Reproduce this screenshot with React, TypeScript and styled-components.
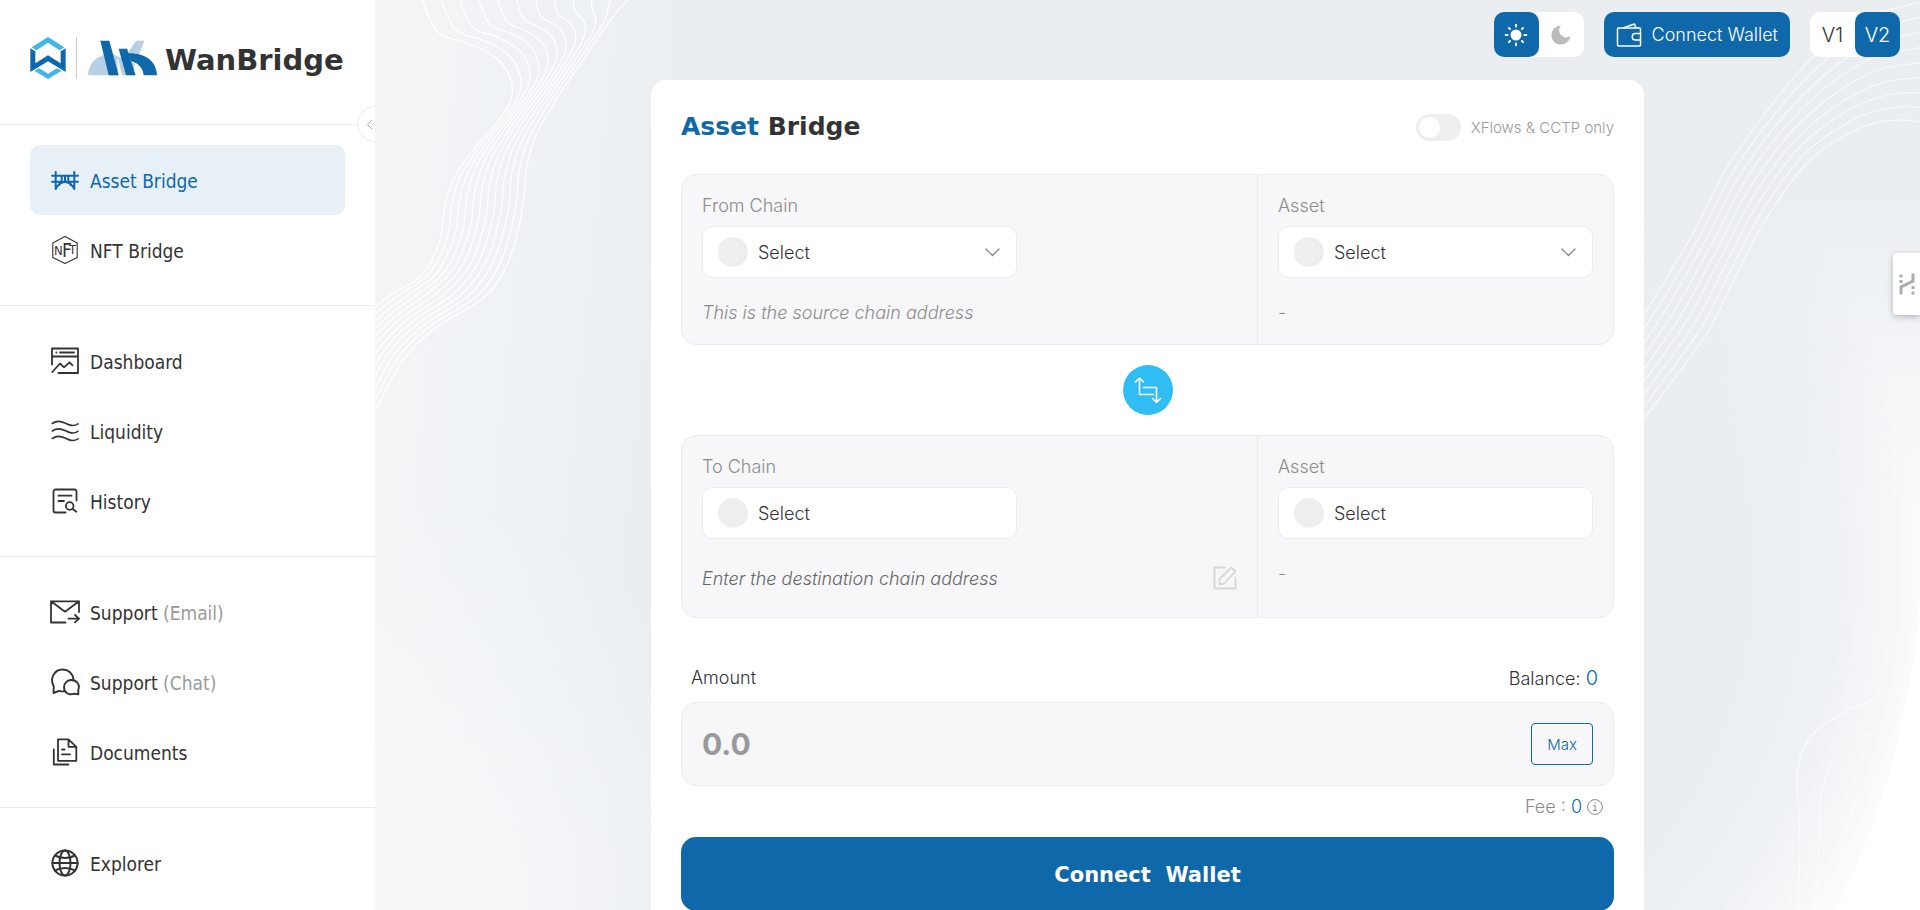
import React from "react";
import styled, { createGlobalStyle } from "styled-components";

const blue = "#0f68aa";
const ink = "#333333";
const muted = "#999999";
const line = "#ebebed";
const uiFont = `Inter, "Liberation Sans", sans-serif`;
const navFont = `"DejaVu Sans Condensed", "Noto Sans", sans-serif`;
const displayFont = `"DejaVu Sans", sans-serif`;

const GlobalStyle = createGlobalStyle`
  *, *::before, *::after { box-sizing: border-box; }
  body { margin: 0; color: ${ink}; font-family: ${uiFont}; font-size: 18px; font-weight: 300; }
  button, input, select { font: inherit; color: inherit; margin: 0; }
  button { cursor: pointer; }
`;

const Shell = styled.div`
  display: flex;
  height: 100vh;
  overflow: hidden;
`;

/* ---------- sidebar ---------- */

const Sidebar = styled.aside`
  position: relative;
  flex: none;
  width: 375px;
  height: 100%;
  overflow: hidden;
  background: #fff;
`;

const Brand = styled.a`
  display: flex;
  align-items: center;
  height: 124px;
  padding: 0 30px 8px;
  color: ${ink};
  text-decoration: none;
`;

const BrandRule = styled.span`
  width: 1px;
  height: 42px;
  margin: 0 11px 0 10px;
  background: #cccccc;
`;

const BrandName = styled.span`
  margin-left: 8px;
  padding-top: 3px;
  font: 700 29px/42px ${displayFont};
`;

const CollapseButton = styled.button`
  position: absolute;
  top: 106px;
  right: -18px;
  display: flex;
  align-items: center;
  width: 36px;
  height: 36px;
  padding: 0 0 0 8px;
  border: 1px solid ${line};
  border-radius: 50%;
  background: #fff;
`;

const NavGroup = styled.ul`
  margin: 0;
  padding: 20px 30px;
  border-top: 1px solid ${line};
  list-style: none;
`;

const NavLink = styled.a<{ $active?: boolean }>`
  display: flex;
  align-items: center;
  gap: 10px;
  height: 70px;
  padding: 0 20px;
  border-radius: 10px;
  background: ${(p) => (p.$active ? "#e7f0f7" : "transparent")};
  color: ${(p) => (p.$active ? blue : ink)};
  font: 400 19px/24px ${navFont};
  text-decoration: none;
`;

const NavText = styled.span`
  padding-top: 2px;
`;

const NavHint = styled.span`
  color: ${muted};
`;

/* ---------- main area ---------- */

const Main = styled.main`
  position: relative;
  flex: 1;
  min-width: 0;
  overflow: hidden auto;
  scrollbar-width: none;
  background: #eaeef1;
`;

const Backdrop = styled.svg`
  position: absolute;
  top: 0;
  left: 0;
  width: 100%;
  height: 100vh;
`;

const Content = styled.div`
  position: relative;
  display: flex;
  flex-direction: column;
  align-items: center;
  padding: 12px 20px 40px;
`;

const TopBar = styled.header`
  display: flex;
  align-self: flex-end;
  gap: 20px;
  margin-bottom: 23px;
`;

const Segmented = styled.div`
  display: flex;
  border-radius: 10px;
  background: #fff;
`;

const Segment = styled.button<{ $on?: boolean }>`
  display: flex;
  align-items: center;
  justify-content: center;
  width: 45px;
  height: 45px;
  padding: 0;
  border: 0;
  border-radius: 10px;
  background: ${(p) => (p.$on ? blue : "transparent")};
  color: ${(p) => (p.$on ? "#fff" : ink)};
  font-size: 20px;
`;

const WalletButton = styled.button`
  display: flex;
  align-items: center;
  gap: 10px;
  height: 45px;
  padding: 0 12px;
  border: 0;
  border-radius: 10px;
  background: ${blue};
  color: #fff;
`;

const Card = styled.section`
  width: 100%;
  max-width: 993px;
  padding: 30px;
  border-radius: 15px;
  background: #fff;
`;

const CardHead = styled.div`
  display: flex;
  align-items: center;
  justify-content: space-between;
  margin-bottom: 30px;
`;

const Title = styled.h1`
  margin: 0;
  font: 700 25px/34px ${displayFont};
`;

const TitleAccent = styled.span`
  color: ${blue};
`;

const SwitchLabel = styled.label`
  display: flex;
  align-items: center;
  gap: 10px;
  color: ${muted};
  font-size: 15px;
`;

const Switch = styled.input`
  appearance: none;
  display: flex;
  align-items: center;
  width: 45px;
  height: 27px;
  padding: 0 3px;
  border-radius: 14px;
  background: #eeeeee;
  &::before {
    content: "";
    width: 21px;
    height: 21px;
    border-radius: 50%;
    background: #fff;
  }
  &:checked { justify-content: flex-end; background: ${blue}; }
`;

const Panel = styled.div`
  display: flex;
  border: 1px solid ${line};
  border-radius: 15px;
  background: #f7f7f9;
`;

const ChainColumn = styled.div`
  flex: 1;
  min-width: 0;
  padding: 20px;
`;

const AssetColumn = styled.div`
  flex: none;
  width: 356px;
  padding: 20px;
  border-left: 1px solid ${line};
`;

const FieldLabel = styled.label`
  display: block;
  margin-bottom: 9px;
  color: #8c8c8c;
  line-height: 22px;
`;

const SelectBox = styled.div`
  position: relative;
  display: flex;
  align-items: center;
  width: 100%;
  max-width: 315px;
  height: 52px;
  border: 1px solid ${line};
  border-radius: 10px;
  background: #fff;
`;

const TokenDot = styled.span`
  position: absolute;
  left: 15px;
  width: 30px;
  height: 30px;
  border-radius: 50%;
  background: #eeeeee;
  pointer-events: none;
`;

const SelectControl = styled.select`
  appearance: none;
  width: 100%;
  height: 100%;
  padding: 0 40px 0 55px;
  border: 0;
  border-radius: 10px;
  background: transparent;
`;

const Chevron = styled.svg`
  position: absolute;
  right: 16px;
  pointer-events: none;
`;

const Note = styled.p<{ $italic?: boolean }>`
  margin: 24px 0 0;
  color: #8c8c8c;
  line-height: 22px;
  font-style: ${(p) => (p.$italic ? "italic" : "normal")};
`;

const AddressRow = styled.div`
  display: flex;
  align-items: center;
  height: 38px;
  margin-top: 20px;
`;

const AddressInput = styled.input`
  flex: 1;
  min-width: 0;
  height: 100%;
  padding: 0;
  border: 0;
  outline: 0;
  background: transparent;
  font-style: italic;
  &::placeholder { color: #666666; opacity: 1; }
`;

const IconButton = styled.button`
  display: flex;
  padding: 0;
  border: 0;
  background: transparent;
`;

const SwapButton = styled.button`
  display: flex;
  align-items: center;
  justify-content: center;
  width: 50px;
  height: 50px;
  margin: 20px auto;
  padding: 0;
  border: 0;
  border-radius: 50%;
  background: #2fbdf3;
`;

const AmountHead = styled.div`
  display: flex;
  justify-content: space-between;
  margin: 48px 16px 11px 10px;
  line-height: 24px;
`;

const Figure = styled.span`
  color: ${blue};
  font-size: 20px;
`;

const AmountPanel = styled(Panel)`
  align-items: center;
  height: 84px;
  padding: 0 20px;
`;

const AmountInput = styled.input`
  flex: 1;
  min-width: 0;
  height: 100%;
  padding: 0;
  border: 0;
  outline: 0;
  background: transparent;
  font-size: 30px;
  font-weight: 700;
  &::placeholder { color: ${muted}; opacity: 1; }
`;

const MaxButton = styled.button`
  width: 62px;
  height: 42px;
  padding: 0;
  border: 1px solid ${blue};
  border-radius: 4px;
  background: transparent;
  color: ${blue};
  font-size: 15px;
`;

const FeeRow = styled.div`
  display: flex;
  align-items: center;
  justify-content: flex-end;
  gap: 5px;
  margin: 9px 11px 18px 0;
  color: #8c8c8c;
  line-height: 24px;
`;

const FeeValue = styled.span`
  color: ${blue};
`;

const SubmitButton = styled.button`
  width: 100%;
  height: 74px;
  padding: 2px 0 0;
  border: 0;
  border-radius: 15px;
  background: ${blue};
  color: #fff;
  font: 700 21px/30px ${displayFont};
  white-space: pre;
`;

const SideTab = styled.button`
  position: fixed;
  top: 253px;
  right: 0;
  display: flex;
  align-items: center;
  width: 27px;
  height: 62px;
  padding: 0 0 0 6px;
  border: 0;
  border-radius: 4px 0 0 4px;
  background: #fff;
  box-shadow: 0 2px 6px rgba(0, 0, 0, 0.25);
`;

/* ---------- drawings ---------- */

type Pt = [number, number];

/* Smooth curve through the given points (Catmull-Rom as cubic Béziers). */
function smooth(p: Pt[]): string {
  let d = `M${p[0][0].toFixed(1)} ${p[0][1].toFixed(1)}`;
  for (let i = 0; i < p.length - 1; i++) {
    const a = p[Math.max(i - 1, 0)];
    const b = p[i];
    const c = p[i + 1];
    const e = p[Math.min(i + 2, p.length - 1)];
    const n = [
      b[0] + (c[0] - a[0]) / 6,
      b[1] + (c[1] - a[1]) / 6,
      c[0] - (e[0] - b[0]) / 6,
      c[1] - (e[1] - b[1]) / 6,
      c[0],
      c[1],
    ].map((v) => v.toFixed(1));
    d += ` C${n.join(" ")}`;
  }
  return d;
}

function bundle(from: Pt[], to: Pt[], count: number): string[] {
  return Array.from({ length: count }, (_, k) => {
    const t = k / (count - 1);
    return smooth(from.map((p, i): Pt => [p[0] + (to[i][0] - p[0]) * t, p[1] + (to[i][1] - p[1]) * t]));
  });
}

const leftWaves = bundle(
  [[45, -5], [63, 32], [92, 43], [120, 57], [135, 78], [136, 100], [118, 127], [98, 150], [78, 180], [69, 210], [65, 240], [46, 276], [18, 293], [-5, 312], [-25, 335], [-40, 365]],
  [[255, -5], [251, 2], [247, 6], [243, 10], [238, 17], [228, 30], [208, 60], [182, 98], [162, 133], [152, 165], [148, 205], [136, 255], [112, 295], [62, 327], [28, 360], [0, 412]],
  12
);

const rightWaves = bundle(
  [[1550, 1], [1485, 20], [1438, 57], [1395, 107], [1352, 167], [1318, 233], [1272, 310], [1225, 380]],
  [[1550, 123], [1522, 120], [1485, 128], [1435, 160], [1395, 213], [1365, 267], [1332, 333], [1262, 428]],
  9
);

function Background() {
  return (
    <Backdrop viewBox="0 0 1545 910" preserveAspectRatio="none" aria-hidden="true">
      <defs>
        <linearGradient id="leftLight" x1="0" y1="0" x2="1" y2="0.3">
          <stop offset="0" stopColor="#f4f5f7" />
          <stop offset="0.6" stopColor="#eef2f4" />
          <stop offset="1" stopColor="#eaeef1" />
        </linearGradient>
        <radialGradient id="rightGlow" gradientUnits="userSpaceOnUse" cx="930" cy="570" r="615">
          <stop offset="0.7" stopColor="#eaeef1" />
          <stop offset="0.87" stopColor="#eff2f5" />
          <stop offset="0.95" stopColor="#f5f6f8" />
          <stop offset="1" stopColor="#fafbfc" />
        </radialGradient>
        <linearGradient id="topFade" x1="0" y1="0" x2="0" y2="1">
          <stop offset="0" stopColor="#eaeef1" />
          <stop offset="0.35" stopColor="#eaeef1" />
          <stop offset="1" stopColor="#eaeef1" stopOpacity="0" />
        </linearGradient>
        <radialGradient id="lowerLight" gradientUnits="userSpaceOnUse" cx="0" cy="910" r="420">
          <stop offset="0" stopColor="#f7f8fa" />
          <stop offset="1" stopColor="#f7f8fa" stopOpacity="0" />
        </radialGradient>
      </defs>
      <rect width="300" height="910" fill="url(#leftLight)" />
      <rect y="400" width="500" height="510" fill="url(#lowerLight)" />
      <rect x="1200" width="345" height="910" fill="url(#rightGlow)" />
      <rect x="1200" width="345" height="520" fill="url(#topFade)" />
      <path d="M1545 600 C1541 650 1536 690 1515 771 C1500 822 1482 866 1460 912 H1546 Z" fill="#fff" />
      <g fill="none" stroke="#fff" strokeWidth="1.2">
        {leftWaves.map((d) => <path key={d} d={d} />)}
      </g>
      <g fill="none" stroke="#fff" strokeOpacity="0.65" strokeWidth="1.2">
        {rightWaves.map((d) => <path key={d} d={d} />)}
        <path d="M1535 689 C1490 700 1450 718 1435 738 C1418 758 1422 785 1424 815 C1426 850 1425 880 1422 912" />
        <path d="M1526 722 C1490 733 1460 748 1450 778 C1441 805 1448 850 1439 912" />
        <path d="M1515 769 C1485 785 1466 815 1466 872" />
      </g>
    </Backdrop>
  );
}

function HexMark() {
  return (
    <svg width="36" height="42" viewBox="90 111 106 126" aria-hidden="true">
      <path d="M94 142 143 111l49 31-14 9-35-23-35 23z" fill="#3fb5e8" />
      <path d="M102 212l41 25 41-25-14-7-27 16-27-16z" fill="#3fb5e8" />
      <path d="M90 145l15 9v36l38-24 38 24v-36l15-9v71l-53-32-53 32z" fill={blue} />
    </svg>
  );
}

function BridgeMark() {
  return (
    <svg width="69" height="36" viewBox="264 121 207 105" aria-hidden="true">
      <g fill="#b7cfe3">
        <path d="M264 225C266 188 292 163 335 161L405 190 398 225H305C305 212 308 204 314 198L318 225z" />
        <path d="M408 122h25l-24 62-30-20 10-14z" />
      </g>
      <path d="M352 168l14 57h-12z" fill="#fff" />
      <g fill={blue}>
        <path d="M301 122h27l28 103h-30z" />
        <path d="M356 146h25l26 79h-29z" />
        <path d="M384 159C436 158 470 183 471 225H431C429 203 415 188 393 183z" />
      </g>
    </svg>
  );
}

function NavIcon({ width = 1.6, children }: { width?: number; children: React.ReactNode }) {
  return (
    <svg width="30" height="30" viewBox="0 0 30 30" fill="none" stroke="currentColor" strokeWidth={width} strokeLinecap="round" strokeLinejoin="round" aria-hidden="true">
      {children}
    </svg>
  );
}

const icons = {
  bridge: (
    <NavIcon width={2}>
      <path d="M2 10.7h26M2 16.7h26M5.7 7v17M24.3 7v17M11.7 10.7v6M18.3 10.7v6M15 10.7v6M5.7 24c2-4 5-7 9.3-7s7.300 3 9.300 7M9.500 17v3M20.500 17v3" />
    </NavIcon>
  ),
  nft: (
    <NavIcon width={1.1}>
      <path d="M15 1.500 27.200 8v14.500L15 28.500 2.800 22.500V8z" />
      <g fill="currentColor" stroke="none" fontFamily="Liberation Sans Narrow, DejaVu Sans Condensed, sans-serif" fontWeight="400">
        <text x="4" y="20" fontSize="13">N</text>
        <text x="12" y="22" fontSize="19">F</text>
        <text x="19" y="19" fontSize="13">T</text>
      </g>
    </NavIcon>
  ),
  dashboard: (
    <NavIcon width={1.8}>
      <path d="M2 18.500V2.500h26v24.500H8.500M2 10.500h26M6.300 6.500h.2M10 6.500h14M2.300 26 10 17.500l4 3.800 5.500-5 3 3" />
    </NavIcon>
  ),
  liquidity: (
    <NavIcon>
      <path d="M2.300 7.500C7 4 11 5 15 7s8 4 13 .8M2.300 15C7 11.500 11 12.500 15 14.500s8 4 13 .8M2.300 22.500C7 19 11 20 15 22s8 4 13 .8" />
    </NavIcon>
  ),
  history: (
    <NavIcon width={1.8}>
      <path d="M26.500 14.500V5.500a2 2 0 0 0-2-2h-19a2 2 0 0 0-2 2v19a2 2 0 0 0 2 2H15.500M8.500 9.700h13M8.500 15h5.500M22.500 22.700l3.800 3" />
      <circle cx="19.700" cy="20" r="3.800" />
    </NavIcon>
  ),
  email: (
    <NavIcon width={1.8}>
      <path d="M29 15V4.300H1v21.200h14.500M1 4.300l14 10.400 14-10.400M18.500 21.700H29M25 18l4 3.700-4 3.700" />
    </NavIcon>
  ),
  chat: (
    <NavIcon width={1.9}>
      <path d="M14 24.300c-2 .3-3.500 0-5-.5L3.500 26l.3-6.500C-.5 12 4 2.500 12.500 2.500c6 0 10.300 4 11 9.700" />
      <path d="M28.300 27.300v-4.500c2-5-1.500-9.800-7-9.800-4 0-7.300 3.200-7.300 7.200 0 5.500 5 8.300 10 6.500z" />
    </NavIcon>
  ),
  documents: (
    <NavIcon width={1.8}>
      <path d="M8 2.300h10.500l7.800 7.500v14H8zM18.500 2.300v7.500h7.800M3.800 12.500V27.500h14.500M12 12.500h2.500M12 17.300h8" />
    </NavIcon>
  ),
  globe: (
    <NavIcon width={2}>
      <circle cx="15" cy="15" r="12.600" />
      <ellipse cx="15" cy="15" rx="5.500" ry="12.600" />
      <path d="M2.400 15h25.200M5 7.500c6 3.200 14 3.200 20 0M5 22.500c6-3.200 14-3.200 20 0" />
    </NavIcon>
  ),
};

const SunIcon = () => (
  <svg width="24" height="24" viewBox="0 0 24 24" stroke="#fff" strokeWidth="2" strokeLinecap="round" aria-hidden="true">
    <circle cx="12" cy="12" r="4.500" fill="#fff" />
    <path d="M12 1.700v1.800M12 20.500v1.800M1.700 12h1.800M20.500 12h1.800M5 5l1 1M18 18l1 1M19 5l-1 1M5 19l1-1" />
  </svg>
);

const MoonIcon = () => (
  <svg width="20" height="20" viewBox="0 0 20 20" aria-hidden="true">
    <path d="M10 .6A7 7 0 0 0 19.300 11 9.500 9.500 0 1 1 10 .6z" fill="#bbbbbb" />
  </svg>
);

const WalletIcon = () => (
  <svg width="26" height="26" viewBox="0 0 26 26" fill="none" stroke="#fff" strokeWidth="1.500" strokeLinejoin="round" aria-hidden="true">
    <rect x="1.500" y="6" width="23" height="18" rx="1" />
    <path d="M7 6 18.500 2 20 6M24.500 11.500h-5a3.200 3.200 0 0 0 0 6.500h5" />
  </svg>
);

const EditIcon = () => (
  <svg width="24" height="24" viewBox="0 0 24 24" fill="none" stroke="#d6d6d8" strokeWidth="1.800" strokeLinejoin="round" aria-hidden="true">
    <path d="M12.500 1.500H1.500v21h21V11.500M6.500 18v-5L18.300 1.500l4 4L10.500 18z" />
  </svg>
);

const SwapIcon = () => (
  <svg width="28" height="28" viewBox="0 0 28 28" fill="none" stroke="#fff" strokeWidth="1.600" strokeLinecap="round" strokeLinejoin="round" aria-hidden="true">
    <path d="M5.500 2v16.500h14M1.500 6l4-4 4 4M9.500 11.500h13V26.500M18.500 22.500l4 4 4-4" />
  </svg>
);

const InfoIcon = () => (
  <svg width="16" height="16" viewBox="0 0 16 16" fill="none" stroke="#888" aria-hidden="true">
    <circle cx="8" cy="8" r="7.400" />
    <path d="M6.500 6.500h1.700v5M6 11.500h4M7.500 4h1.200" />
  </svg>
);

const TabMark = () => (
  <svg width="16" height="22" viewBox="0 0 16 22" fill="none" stroke="#a9adb1" strokeWidth="3" aria-hidden="true">
    <path d="M2 1.500v3M2 7v3M2 21.500v-7.500L14 8V.5M14 21.500v-3M14 16v-3" />
  </svg>
);

/* ---------- composed parts ---------- */

type NavEntry = { icon: keyof typeof icons; text: string; hint?: string; active?: boolean };

const navGroups: NavEntry[][] = [
  [
    { icon: "bridge", text: "Asset Bridge", active: true },
    { icon: "nft", text: "NFT Bridge" },
  ],
  [
    { icon: "dashboard", text: "Dashboard" },
    { icon: "liquidity", text: "Liquidity" },
    { icon: "history", text: "History" },
  ],
  [
    { icon: "email", text: "Support", hint: "(Email)" },
    { icon: "chat", text: "Support", hint: "(Chat)" },
    { icon: "documents", text: "Documents" },
  ],
  [{ icon: "globe", text: "Explorer" }],
];

function Picker({ id, label, arrow }: { id: string; label: string; arrow?: boolean }) {
  return (
    <>
      <FieldLabel htmlFor={id}>{label}</FieldLabel>
      <SelectBox>
        <TokenDot />
        <SelectControl id={id}>
          <option>Select</option>
        </SelectControl>
        {arrow && (
          <Chevron width="15" height="9" viewBox="0 0 15 9" fill="none" stroke="#888" strokeWidth="1.400" strokeLinecap="round" aria-hidden="true">
            <path d="M1 1l6.500 6.500L14 1" />
          </Chevron>
        )}
      </SelectBox>
    </>
  );
}

export default function App() {
  return (
    <Shell>
      <GlobalStyle />
      <Sidebar>
        <Brand href="#">
          <HexMark />
          <BrandRule />
          <BridgeMark />
          <BrandName>WanBridge</BrandName>
        </Brand>
        <nav>
          {navGroups.map((group, g) => (
            <NavGroup key={g}>
              {group.map((item) => (
                <li key={item.icon}>
                  <NavLink href="#" $active={item.active}>
                    {icons[item.icon]}
                    <NavText>
                      {item.text}
                      {item.hint && <NavHint> {item.hint}</NavHint>}
                    </NavText>
                  </NavLink>
                </li>
              ))}
            </NavGroup>
          ))}
        </nav>
        <CollapseButton aria-label="Collapse menu">
          <svg width="7" height="11" viewBox="0 0 7 11" fill="none" stroke="#aaa" aria-hidden="true">
            <path d="M6 1 1.500 5.500 6 10" />
          </svg>
        </CollapseButton>
      </Sidebar>

      <Main>
        <Background />
        <Content>
          <TopBar>
            <Segmented>
              <Segment $on aria-label="Light theme" aria-pressed="true"><SunIcon /></Segment>
              <Segment aria-label="Dark theme" aria-pressed="false"><MoonIcon /></Segment>
            </Segmented>
            <WalletButton>
              <WalletIcon />
              Connect Wallet
            </WalletButton>
            <Segmented>
              <Segment aria-pressed="false">V1</Segment>
              <Segment $on aria-pressed="true">V2</Segment>
            </Segmented>
          </TopBar>

          <Card>
            <CardHead>
              <Title><TitleAccent>Asset</TitleAccent> Bridge</Title>
              <SwitchLabel>
                <Switch type="checkbox" role="switch" />
                XFlows &amp; CCTP only
              </SwitchLabel>
            </CardHead>

            <Panel>
              <ChainColumn>
                <Picker id="from-chain" label="From Chain" arrow />
                <Note $italic>This is the source chain address</Note>
              </ChainColumn>
              <AssetColumn>
                <Picker id="from-asset" label="Asset" arrow />
                <Note>-</Note>
              </AssetColumn>
            </Panel>

            <SwapButton aria-label="Swap chains"><SwapIcon /></SwapButton>

            <Panel>
              <ChainColumn>
                <Picker id="to-chain" label="To Chain" />
                <AddressRow>
                  <AddressInput aria-label="Destination address" placeholder="Enter the destination chain address" />
                  <IconButton aria-label="Edit address"><EditIcon /></IconButton>
                </AddressRow>
              </ChainColumn>
              <AssetColumn>
                <Picker id="to-asset" label="Asset" />
                <Note>-</Note>
              </AssetColumn>
            </Panel>

            <AmountHead>
              <label htmlFor="amount">Amount</label>
              <span>Balance: <Figure>0</Figure></span>
            </AmountHead>
            <AmountPanel>
              <AmountInput id="amount" placeholder="0.0" inputMode="decimal" />
              <MaxButton>Max</MaxButton>
            </AmountPanel>
            <FeeRow>
              <span>Fee : <FeeValue>0</FeeValue></span>
              <InfoIcon />
            </FeeRow>
            <SubmitButton>{"Connect  Wallet"}</SubmitButton>
          </Card>
        </Content>
      </Main>

      <SideTab aria-label="Open side panel"><TabMark /></SideTab>
    </Shell>
  );
}
